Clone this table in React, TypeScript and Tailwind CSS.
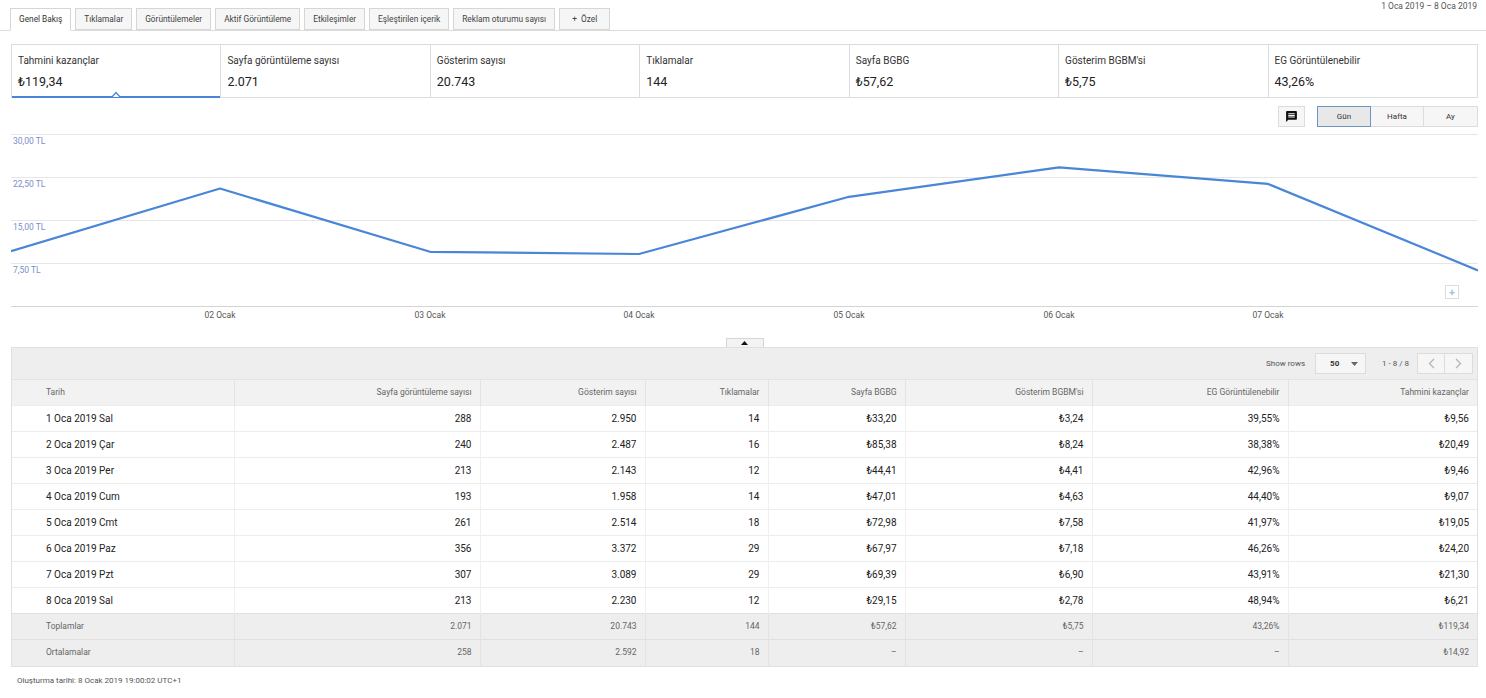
import React from "react";

const TABS = [
  "Genel Bakış",
  "Tıklamalar",
  "Görüntülemeler",
  "Aktif Görüntüleme",
  "Etkileşimler",
  "Eşleştirilen içerik",
  "Reklam oturumu sayısı",
  "+  Özel",
];

const CARDS = [
  { label: "Tahmini kazançlar", value: "₺119,34" },
  { label: "Sayfa görüntüleme sayısı", value: "2.071" },
  { label: "Gösterim sayısı", value: "20.743" },
  { label: "Tıklamalar", value: "144" },
  { label: "Sayfa BGBG", value: "₺57,62" },
  { label: "Gösterim BGBM'si", value: "₺5,75" },
  { label: "EG Görüntülenebilir", value: "43,26%" },
];

const COLS = [
  { title: "Tarih", w: 223 },
  { title: "Sayfa görüntüleme sayısı", w: 246 },
  { title: "Gösterim sayısı", w: 165 },
  { title: "Tıklamalar", w: 123 },
  { title: "Sayfa BGBG", w: 137 },
  { title: "Gösterim BGBM'si", w: 187 },
  { title: "EG Görüntülenebilir", w: 196 },
  { title: "Tahmini kazançlar", w: 190 },
];

const ROWS = [
  ["1 Oca 2019 Sal", "288", "2.950", "14", "₺33,20", "₺3,24", "39,55%", "₺9,56"],
  ["2 Oca 2019 Çar", "240", "2.487", "16", "₺85,38", "₺8,24", "38,38%", "₺20,49"],
  ["3 Oca 2019 Per", "213", "2.143", "12", "₺44,41", "₺4,41", "42,96%", "₺9,46"],
  ["4 Oca 2019 Cum", "193", "1.958", "14", "₺47,01", "₺4,63", "44,40%", "₺9,07"],
  ["5 Oca 2019 Cmt", "261", "2.514", "18", "₺72,98", "₺7,58", "41,97%", "₺19,05"],
  ["6 Oca 2019 Paz", "356", "3.372", "29", "₺67,97", "₺7,18", "46,26%", "₺24,20"],
  ["7 Oca 2019 Pzt", "307", "3.089", "29", "₺69,39", "₺6,90", "43,91%", "₺21,30"],
  ["8 Oca 2019 Sal", "213", "2.230", "12", "₺29,15", "₺2,78", "48,94%", "₺6,21"],
];

const SUMMARY = [
  ["Toplamlar", "2.071", "20.743", "144", "₺57,62", "₺5,75", "43,26%", "₺119,34"],
  ["Ortalamalar", "258", "2.592", "18", "–", "–", "–", "₺14,92"],
];

const EARNINGS = [9.56, 20.49, 9.46, 9.07, 19.05, 24.2, 21.3, 6.21];
const X_POS = [0, 209, 419, 628, 838, 1048, 1257, 1467];
const GRID = [
  { y: 5, label: "30,00 TL" },
  { y: 48, label: "22,50 TL" },
  { y: 91, label: "15,00 TL" },
  { y: 134, label: "7,50 TL" },
];
const X_LABELS = ["02 Ocak", "03 Ocak", "04 Ocak", "05 Ocak", "06 Ocak", "07 Ocak"];

const toY = (v: number) => 177 - v * (172 / 30);

const Chart = () => {
  const points = EARNINGS.map((v, i) => `${X_POS[i]},${toY(v).toFixed(1)}`).join(" ");
  return (
    <div className="relative h-[209px] mt-[2px]">
      <svg width="1467" height="209" className="block">
        {GRID.map((g) => (
          <g key={g.label}>
            <line x1="0" x2="1467" y1={g.y + 0.5} y2={g.y + 0.5} stroke="#e6e6e6" />
            <text x="2" y={g.y + 10} fontSize="8.5" fill="#7a8ec8" fontFamily="Roboto, Arial, sans-serif">
              {g.label}
            </text>
          </g>
        ))}
        <line x1="0" x2="1467" y1="177.5" y2="177.5" stroke="#d4d4d4" />
        <polyline points={points} fill="none" stroke="#4a86d8" strokeWidth="2.2" strokeLinejoin="round" />
        {X_LABELS.map((l, i) => (
          <text
            key={l}
            x={X_POS[i + 1]}
            y="189"
            fontSize="8.5"
            fill="#555"
            textAnchor="middle"
            fontFamily="Roboto, Arial, sans-serif"
          >
            {l}
          </text>
        ))}
      </svg>
      <div className="absolute left-[1434px] top-[156px] w-[14px] h-[14px] border border-[#dcdcdc] bg-white flex items-center justify-center text-[11px] leading-none font-bold text-[#a9c1e0]">
        +
      </div>
    </div>
  );
};

export default function App() {
  return (
    <div className="w-[1486px] h-[698px] bg-white text-[#222] overflow-hidden" style={{ fontFamily: "Roboto, 'Liberation Sans', Arial, sans-serif" }}>
      {/* top tabs */}
      <div className="relative h-[31px] border-b border-[#dcdcdc]">
        <div className="absolute right-[9px] top-[0px] text-[8.5px] text-[#555]">1 Oca 2019 – 8 Oca 2019</div>
        <div className="flex items-end gap-[4px] pl-[10px] pt-[9px] h-full">
          {TABS.map((t, i) => (
            <div
              key={t}
              className={`h-[22px] flex items-center text-[8.3px] border border-[#d6d6d6] whitespace-pre ${
                i === 0 ? "bg-white border-b-white -mb-px h-[23px] text-[#333]" : "bg-[#f6f6f6] text-[#444]"
              } ${i === 7 ? "px-[12px]" : "px-[8px]"}`}
            >
              {t}
            </div>
          ))}
        </div>
      </div>

      <div className="pl-[11px] w-[1478px]">
        {/* scorecards */}
        <div className="mt-[13px] flex border border-[#dcdcdc] h-[54px]">
          {CARDS.map((c, i) => (
            <div
              key={c.label}
              className={`relative flex-1 px-[6px] pt-[8px] ${i < 6 ? "border-r border-[#dcdcdc]" : ""}`}
            >
              <div className="text-[10px] text-[#333]">{c.label}</div>
              <div className="mt-[5px] text-[12.5px] text-[#222]">{c.value}</div>
              {i === 0 && (
                <div className="absolute left-0 right-0 bottom-[-1px] h-[2px] bg-[#4a86d8]">
                  <svg width="10" height="6" className="absolute left-[99px] top-[-5px]">
                    <polyline points="1,6 5,1.5 9,6" fill="white" stroke="#4a86d8" strokeWidth="1.3" />
                  </svg>
                </div>
              )}
            </div>
          ))}
        </div>

        {/* chart controls */}
        <div className="mt-[8px] flex justify-end items-center h-[21px]">
          <div className="w-[27px] h-[21px] border border-[#dcdcdc] bg-[#f6f6f6] flex items-center justify-center">
            <svg width="13" height="13" viewBox="0 0 24 24">
              <path d="M20 2H4c-1.1 0-2 .9-2 2v18l4-4h14c1.1 0 2-.9 2-2V4c0-1.1-.9-2-2-2zm-2 12H6v-2h12v2zm0-3H6V9h12v2zm0-3H6V6h12v2z" fill="#111" />
            </svg>
          </div>
          <div className="ml-[12px] flex h-[21px] text-[8px] text-[#333]">
            <div className="w-[54px] flex items-center justify-center border border-[#6d95c3] bg-[#e8e8e8]">Gün</div>
            <div className="w-[53px] flex items-center justify-center border-y border-r border-[#dcdcdc] bg-[#f6f6f6]">Hafta</div>
            <div className="w-[54px] flex items-center justify-center border-y border-r border-[#dcdcdc] bg-[#f6f6f6]">Ay</div>
          </div>
        </div>

        <Chart />

        {/* collapse handle */}
        <div className="flex justify-center">
          <div className="w-[38px] h-[9px] border-t border-x border-[#d6d6d6] bg-[#f3f3f3] flex items-center justify-center">
            <svg width="7" height="4">
              <polygon points="0,4 3.5,0 7,4" fill="#111" />
            </svg>
          </div>
        </div>

        {/* table */}
        <div className="border border-[#e0e0e0]">
          <div className="h-[31px] bg-[#eeeeee] flex items-center justify-end pr-[4px] text-[8px] text-[#555]">
            <span className="mr-[10px]">Show rows</span>
            <div className="w-[51px] h-[21px] border border-[#dcdcdc] bg-[#f6f6f6] flex items-center justify-between px-[14px] pr-[7px]">
              <span className="font-bold text-[#333]">50</span>
              <svg width="7" height="4">
                <polygon points="0,0 7,0 3.5,4" fill="#666" />
              </svg>
            </div>
            <span className="ml-[16px] mr-[8px]">1 - 8 / 8</span>
            <div className="flex h-[21px] border border-[#dcdcdc] bg-[#f6f6f6]">
              <div className="w-[27px] flex items-center justify-center border-r border-[#dcdcdc]">
                <svg width="7" height="11">
                  <polyline points="6,1 1.5,5.5 6,10" fill="none" stroke="#b5b5b5" strokeWidth="1.3" />
                </svg>
              </div>
              <div className="w-[27px] flex items-center justify-center">
                <svg width="7" height="11">
                  <polyline points="1,1 5.5,5.5 1,10" fill="none" stroke="#b5b5b5" strokeWidth="1.3" />
                </svg>
              </div>
            </div>
          </div>
          <table className="w-[1465px] table-fixed border-collapse">
            <colgroup>
              {COLS.map((c, i) => (
                <col key={c.title} style={{ width: i === 0 ? c.w - 1 : i === 7 ? c.w - 1 : c.w }} />
              ))}
            </colgroup>
            <thead>
              <tr className="h-[26px] bg-[#f2f2f2] border-t border-[#e3e3e3]">
                {COLS.map((c, i) => (
                  <th
                    key={c.title}
                    className={`font-normal text-[8.5px] text-[#666] border-l border-[#e3e3e3] first:border-l-0 ${
                      i === 0 ? "text-left pl-[34px]" : "text-right pr-[8px]"
                    }`}
                  >
                    {c.title}
                  </th>
                ))}
              </tr>
            </thead>
            <tbody>
              {ROWS.map((r) => (
                <tr key={r[0]} className="h-[26px] border-t border-[#ececec]">
                  {r.map((v, i) => (
                    <td
                      key={i}
                      className={`text-[10px] text-[#222] border-l border-[#f0f0f0] first:border-l-0 ${
                        i === 0 ? "text-left pl-[34px]" : "text-right pr-[8px]"
                      }`}
                    >
                      {v}
                    </td>
                  ))}
                </tr>
              ))}
              {SUMMARY.map((r) => (
                <tr key={r[0]} className="h-[26px] bg-[#eeeeee] border-t border-[#e0e0e0]">
                  {r.map((v, i) => (
                    <td
                      key={i}
                      className={`text-[8.5px] text-[#666] border-l border-[#e3e3e3] first:border-l-0 ${
                        i === 0 ? "text-left pl-[34px]" : "text-right pr-[8px]"
                      }`}
                    >
                      {v}
                    </td>
                  ))}
                </tr>
              ))}
            </tbody>
          </table>
        </div>
      </div>

      <div className="mt-[8px] pl-[17px] text-[8px] text-[#555]">Oluşturma tarihi: 8 Ocak 2019 19:00:02 UTC+1</div>
    </div>
  );
}
